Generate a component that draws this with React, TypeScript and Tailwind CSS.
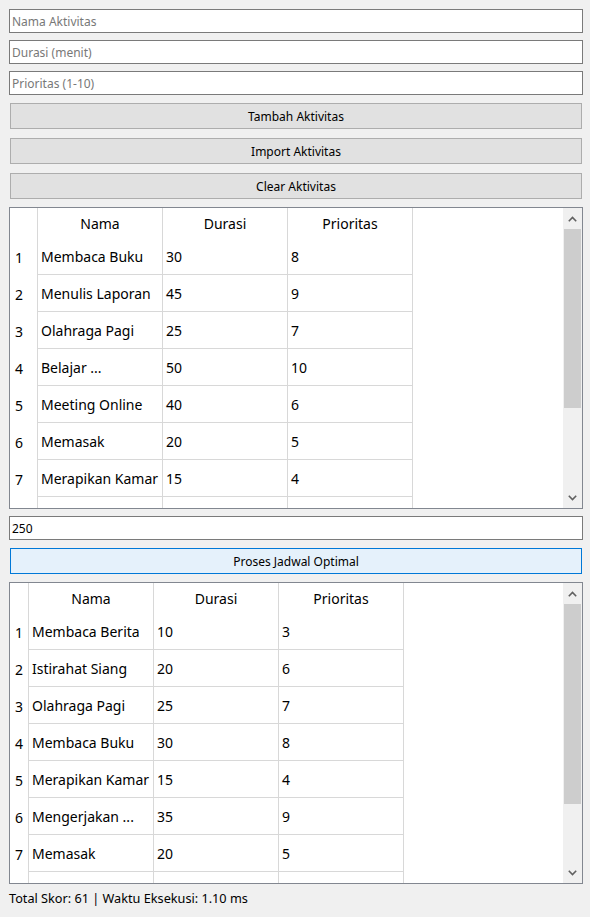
import React from 'react';

type Row = [string, string, string];

const tableOne: Row[] = [
  ['Membaca Buku', '30', '8'],
  ['Menulis Laporan', '45', '9'],
  ['Olahraga Pagi', '25', '7'],
  ['Belajar ...', '50', '10'],
  ['Meeting Online', '40', '6'],
  ['Memasak', '20', '5'],
  ['Merapikan Kamar', '15', '4'],
  ['', '', ''],
];

const tableTwo: Row[] = [
  ['Membaca Berita', '10', '3'],
  ['Istirahat Siang', '20', '6'],
  ['Olahraga Pagi', '25', '7'],
  ['Membaca Buku', '30', '8'],
  ['Merapikan Kamar', '15', '4'],
  ['Mengerjakan ...', '35', '9'],
  ['Memasak', '20', '5'],
  ['', '', ''],
];

function Chevron({ down }: { down?: boolean }) {
  return (
    <svg width="9" height="6" viewBox="0 0 9 6" className={down ? 'rotate-180' : ''}>
      <polyline points="0.8,5.2 4.5,1.5 8.2,5.2" fill="none" stroke="#606060" strokeWidth="1.6" />
    </svg>
  );
}

function LineEdit({ placeholder, value }: { placeholder?: string; value?: string }) {
  return (
    <div className="flex h-[24px] items-center border border-[#7a7a7a] bg-white px-[2px] pt-[1px] text-[12px]">
      {value ? (
        <span className="text-black">{value}</span>
      ) : (
        <span className="text-[#787878]">{placeholder}</span>
      )}
    </div>
  );
}

function PushButton({ label, focused }: { label: string; focused?: boolean }) {
  return (
    <div
      className={
        focused
          ? 'mx-[1px] my-[1px] flex h-[26px] items-center justify-center border border-[#0078d7] bg-[#e5f1fb] pt-[1px] text-[12px] text-black'
          : 'mx-[1px] my-[1px] flex h-[26px] items-center justify-center border border-[#adadad] bg-[#e1e1e1] pt-[1px] text-[12px] text-black'
      }
    >
      {label}
    </div>
  );
}

function Table({ rows, numCell, thumb }: { rows: Row[]; numCell: string; thumb: string }) {
  return (
    <div className="flex h-[302px] border border-[#828790] bg-white text-[14px] text-black">
      <div className="flex-1 overflow-hidden">
        {/* header */}
        <div className="flex h-[30px]">
          <div className={`${numCell} shrink-0 border-r border-[#d8d8d8]`} />
          {['Nama', 'Durasi', 'Prioritas'].map((h) => (
            <div
              key={h}
              className="flex w-[125px] shrink-0 items-center justify-center border-r border-[#d8d8d8] pt-[1px]"
            >
              {h}
            </div>
          ))}
        </div>
        {rows.map((r, i) => (
          <div key={i} className="flex h-[37px]">
            <div className={`${numCell} flex shrink-0 items-center border-r border-[#d8d8d8] pt-[1px]`}>
              {r[0] ? i + 1 : ''}
            </div>
            {r.map((c, j) => (
              <div
                key={j}
                className="flex w-[125px] shrink-0 items-center overflow-hidden whitespace-nowrap border-b border-r border-[#d8d8d8] pl-[3px] pt-[1px]"
              >
                {c}
              </div>
            ))}
          </div>
        ))}
      </div>
      <div className="flex w-[19px] flex-col bg-[#f0f0f0]">
        <div className="flex h-[21px] items-center justify-center">
          <Chevron />
        </div>
        <div className="flex-1">
          <div className={`${thumb} mx-[1px] bg-[#cdcdcd]`} />
        </div>
        <div className="flex h-[21px] items-center justify-center">
          <Chevron down />
        </div>
      </div>
    </div>
  );
}

export default function App() {
  return (
    <div className="min-h-[917px] w-[590px] bg-[#f0f0f0] font-['Noto_Sans',sans-serif]">
      <div className="flex w-[583px] flex-col gap-[7px] pl-[9px] pt-[9px]">
        <LineEdit placeholder="Nama Aktivitas" />
        <LineEdit placeholder="Durasi (menit)" />
        <LineEdit placeholder="Prioritas (1-10)" />
        <PushButton label="Tambah Aktivitas" />
        <PushButton label="Import Aktivitas" />
        <PushButton label="Clear Aktivitas" />
        <Table rows={tableOne} numCell="w-[28px] justify-start pl-[5px]" thumb="h-[179px]" />
        <LineEdit value="250" />
        <PushButton label="Proses Jadwal Optimal" focused />
        <Table rows={tableTwo} numCell="w-[19px] justify-center" thumb="h-[200px]" />
        <div className="flex h-[16px] items-center text-[12.7px] text-black">
          Total Skor: 61 | Waktu Eksekusi: 1.10 ms
        </div>
      </div>
    </div>
  );
}
